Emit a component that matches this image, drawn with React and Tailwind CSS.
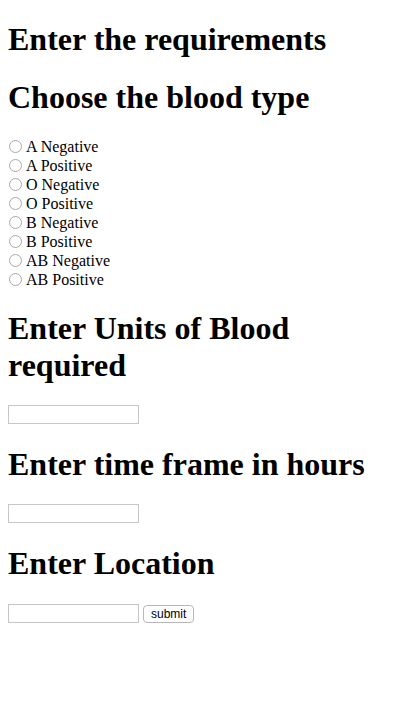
const bloodTypes = [
  'A Negative',
  'A Positive',
  'O Negative',
  'O Positive',
  'B Negative',
  'B Positive',
  'AB Negative',
  'AB Positive',
];

const Heading = ({ children, first }) => (
  <h1
    className={
      first
        ? 'text-[32px] font-bold leading-[37px] mt-[21px] mb-[21px] text-black'
        : 'text-[32px] font-bold leading-[37px] my-[21px] text-black'
    }
  >
    {children}
  </h1>
);

const TextBox = ({ last }) => (
  <input
    type="text"
    className={
      last
        ? 'block w-[131px] h-[19px] mt-[1px] border border-[#c6c6c6] bg-white outline-none'
        : 'block w-[131px] h-[19px] mt-[3px] border border-[#c6c6c6] bg-white outline-none'
    }
  />
);

const App = () => {
  return (
    <div
      className="min-h-[706px] bg-white px-2 pb-8 text-black"
      style={{ fontFamily: '"Liberation Serif", "Times New Roman", serif' }}
    >
      <Heading first>Enter the requirements</Heading>
      <Heading>Choose the blood type</Heading>

      <div className="flex flex-col">
        {bloodTypes.map((type) => (
          <label key={type} className="flex items-center h-[19px] text-base">
            <input
              type="radio"
              name="blood"
              className="appearance-none w-[13px] h-[13px] rounded-full border border-[#a9a9a9] bg-white ml-px mr-[4px] shrink-0"
            />
            <span>{type}</span>
          </label>
        ))}
      </div>

      <Heading>Enter Units of Blood required</Heading>
      <div className="h-[20px]">
        <TextBox />
      </div>

      <Heading>Enter time frame in hours</Heading>
      <div className="h-[20px]">
        <TextBox />
      </div>

      <Heading>Enter Location</Heading>
      <div className="flex items-start h-[20px] gap-[4px]">
        <TextBox last />
        <button
          type="button"
          className="h-[18px] mt-[2px] px-[7px] rounded-[4px] border border-[#b8b8b8] bg-white text-[12px] leading-none text-black"
          style={{ fontFamily: '"Liberation Sans", Arial, sans-serif' }}
        >
          submit
        </button>
      </div>
    </div>
  );
};

export default App;
